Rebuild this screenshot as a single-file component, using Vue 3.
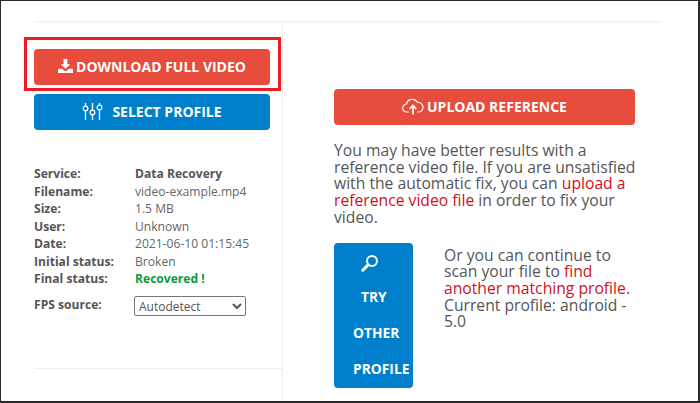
<script setup>
const rows = [
  ['Service:', 'Data Recovery', 'strong'],
  ['Filename:', 'video-example.mp4', ''],
  ['Size:', '1.5 MB', ''],
  ['User:', 'Unknown', ''],
  ['Date:', '2021-06-10 01:15:45', ''],
  ['Initial status:', 'Broken', ''],
  ['Final status:', 'Recovered !', 'ok'],
]
</script>

<template>
  <div class="page">
    <div class="top-rule"></div>
    <div class="columns">
      <section class="left">
        <div class="left-main">
          <div class="highlighted">
            <a class="btn red">
              <svg class="ico-dl" viewBox="0 0 16 15" width="15" height="14" fill="#fff">
                <path d="M6 0h4v5.500h3L8 10.500 3 5.500h3z" />
                <path d="M0 10.500h4.500L7 12.800h2l2.500-2.300H16V15H0z" />
              </svg>
              <span>DOWNLOAD FULL VIDEO</span>
            </a>
          </div>
          <a class="btn blue">
            <svg class="ico-sl" viewBox="0 0 21 17" width="21" height="17" fill="none" stroke="#fff" stroke-width="1.300">
              <path d="M3.500 0v3M3.500 8v9M10.500 0v7M10.500 12v5M17.500 0v2M17.500 7v10" />
              <circle cx="3.500" cy="5.500" r="2.300" />
              <circle cx="10.500" cy="9.500" r="2.300" />
              <circle cx="17.500" cy="4.500" r="2.300" />
            </svg>
            <span class="sel-label">SELECT PROFILE</span>
          </a>
          <dl class="info">
            <div v-for="r in rows" :key="r[0]" class="row">
              <dt>{{ r[0] }}</dt>
              <dd :class="r[2]">{{ r[1] }}</dd>
            </div>
            <div class="row fps">
              <dt>FPS source:</dt>
              <dd>
                <select class="sel">
                  <option>Autodetect</option>
                </select>
              </dd>
            </div>
          </dl>
        </div>
        <div class="left-rule"></div>
      </section>
      <section class="right">
        <a class="btn red upload">
          <svg viewBox="0 0 22 18" width="22" height="18" fill="none" stroke="#fff" stroke-width="1.200">
            <path d="M7 15H5a4 4 0 0 1-.6-8A6 6 0 0 1 15.500 5.500 4.800 4.800 0 0 1 17 15h-2" />
            <path d="M11 17.500V9M7.800 11.800 11 8.500l3.200 3.300" stroke-width="1.700" />
          </svg>
          <span>UPLOAD REFERENCE</span>
        </a>
        <p class="lead">
          You may have better results with a reference video file. If you are unsatisfied with the automatic fix, you can
          <span class="link">upload a reference video file</span> in order to fix your video.
        </p>
        <div class="try">
          <a class="try-btn">
            <svg viewBox="0 0 18 18" width="18" height="18" fill="none" stroke="#fff">
              <circle cx="11" cy="7" r="5" stroke-width="2" />
              <path d="M7.200 10.800 1.800 16.200" stroke-width="3" stroke-linecap="round" />
            </svg>
            <span class="l1">TRY</span>
            <span class="l2">OTHER</span>
            <span class="l3">PROFILE</span>
          </a>
          <p class="alt">
            Or you can continue to scan your file to <span class="link">find another matching profile</span>.
            Current profile: android - 5.0
          </p>
        </div>
      </section>
    </div>
  </div>
</template>

<style>
html, body { margin: 0; background: #fff; }
</style>

<style scoped>
.page {
  box-sizing: border-box;
  width: 700px;
  height: 403px;
  overflow: hidden;
  background: #fff;
  border-style: solid;
  border-color: #2b2b2b;
  border-width: 1px 2px 2px 1px;
  padding: 20px 37px 0 33px;
  font-family: "Open Sans", "Liberation Sans", sans-serif;
  color: #555;
}
.top-rule { height: 2px; background: #f5f5f5; }
.columns { display: flex; height: 378px; }
.left {
  box-sizing: border-box;
  width: 249px;
  flex: none;
  border-right: 1px solid #eee;
  display: flex;
  flex-direction: column;
}
.left-main { flex: none; height: 345px; padding-top: 26px; box-sizing: border-box; }
.left-rule { height: 1px; background: #eee; }
.btn {
  box-sizing: border-box;
  display: flex;
  align-items: center;
  justify-content: center;
  width: 236px;
  height: 36px;
  padding-bottom: 2px;
  border-radius: 4px;
  color: #fff;
  font-weight: 700;
  font-size: 14px;
  white-space: nowrap;
}
.red { background: #e74c3c; }
.blue { background: #0080cc; margin-top: 9px; }
.highlighted { position: relative; width: 236px; }
.highlighted::after {
  content: "";
  position: absolute;
  left: -10px;
  top: -12px;
  width: 257px;
  height: 54px;
  box-sizing: border-box;
  border: 3px solid #ed1c24;
  pointer-events: none;
}
.ico-dl { margin-right: 3px; }
.ico-sl { margin-right: 9px; }
.info { margin: 35px 0 0; font-size: 12.100px; line-height: 17.500px; }
.row { display: flex; }
dt { width: 101px; flex: none; font-weight: 700; color: #555; }
dd { margin: 0; color: #666; }
dd.strong { font-weight: 700; color: #555; }
dd.ok { font-weight: 700; color: #0a9a3c; }
.fps { margin-top: 8px; }
.sel {
  display: block;
  box-sizing: border-box;
  width: 112px;
  height: 20px;
  margin-left: -1px;
  padding: 0;
  border: 1px solid #777;
  border-radius: 2px;
  background: #fff;
  color: #555;
  font: 12px "Open Sans", sans-serif;
}
.right { padding: 66px 0 0 51px; flex: none; width: 302px; }
.upload { width: 301px; }
.upload svg { margin-right: 3px; }
.lead {
  margin: 17px 0 0;
  width: 304px;
  font-size: 15.700px;
  line-height: 16.700px;
  color: #555;
}
.link { color: #d0101c; }
.try { display: flex; margin-top: 17px; }
.try-btn {
  box-sizing: border-box;
  flex: none;
  width: 79px;
  height: 145px;
  background: #0080cc;
  border-radius: 4px;
  color: #fff;
  font-weight: 700;
  font-size: 13.800px;
  display: flex;
  flex-direction: column;
  padding: 11px 0 0 19px;
}
.try-btn svg { margin-left: 8px; }
.try-btn span { display: block; line-height: 36px; }
.l1 { margin: 7px 0 0 8px; }
.alt {
  margin: 4px 0 0 31px;
  width: 196px;
  font-size: 15.700px;
  line-height: 16.700px;
  color: #555;
}
</style>
